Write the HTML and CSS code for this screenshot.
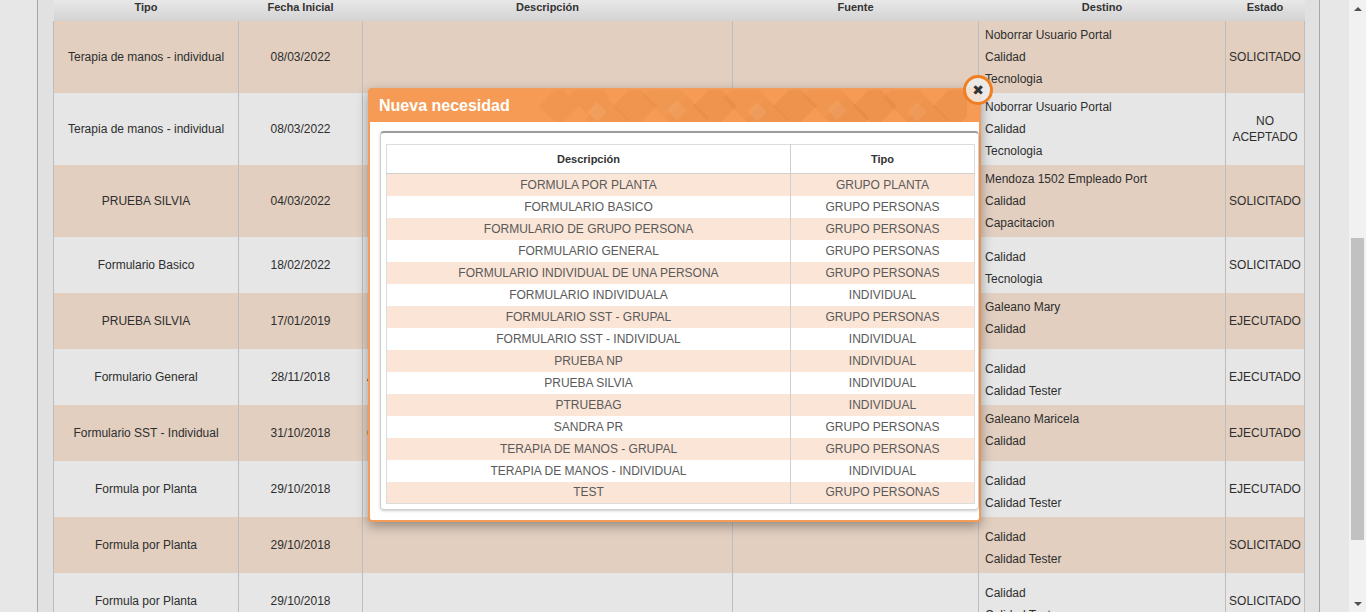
FILE: index.html
```html
<!DOCTYPE html>
<html lang="es">
<head>
<meta charset="utf-8">
<title>Necesidades</title>
<link rel="stylesheet" href="styles.css">
</head>
<body>
<div class="page">
  <div class="gutter"></div>
  <div class="content">
    <table class="grid">
      <colgroup>
        <col style="width:185px"><col style="width:124px"><col style="width:370px"><col style="width:246px"><col style="width:247px"><col style="width:79px">
      </colgroup>
      <thead>
        <tr><th>Tipo</th><th>Fecha Inicial</th><th>Descripción</th><th>Fuente</th><th>Destino</th><th>Estado</th></tr>
      </thead>
      <tbody>
        <tr class="odd"><td>Terapia de manos - individual</td><td>08/03/2022</td><td class="desc"></td><td></td><td class="dest"><div>Noborrar Usuario Portal</div><div>Calidad</div><div>Tecnologia</div></td><td>SOLICITADO</td></tr>
        <tr class="even"><td>Terapia de manos - individual</td><td>08/03/2022</td><td class="desc"></td><td></td><td class="dest"><div>Noborrar Usuario Portal</div><div>Calidad</div><div>Tecnologia</div></td><td>NO ACEPTADO</td></tr>
        <tr class="odd"><td>PRUEBA SILVIA</td><td>04/03/2022</td><td class="desc"></td><td></td><td class="dest"><div>Mendoza 1502 Empleado Port</div><div>Calidad</div><div>Capacitacion</div></td><td>SOLICITADO</td></tr>
        <tr class="even"><td>Formulario Basico</td><td>18/02/2022</td><td class="desc"></td><td></td><td class="dest dest-low"><div>Calidad</div><div>Tecnologia</div></td><td>SOLICITADO</td></tr>
        <tr class="odd"><td>PRUEBA SILVIA</td><td>17/01/2019</td><td class="desc"></td><td></td><td class="dest"><div>Galeano Mary</div><div>Calidad</div></td><td>EJECUTADO</td></tr>
        <tr class="even"><td>Formulario General</td><td>28/11/2018</td><td class="desc">Aplica a todo el personal</td><td></td><td class="dest dest-low"><div>Calidad</div><div>Calidad Tester</div></td><td>EJECUTADO</td></tr>
        <tr class="odd"><td>Formulario SST - Individual</td><td>31/10/2018</td><td class="desc">Control SST individual</td><td></td><td class="dest"><div>Galeano Maricela</div><div>Calidad</div></td><td>EJECUTADO</td></tr>
        <tr class="even"><td>Formula por Planta</td><td>29/10/2018</td><td class="desc"></td><td></td><td class="dest dest-low"><div>Calidad</div><div>Calidad Tester</div></td><td>EJECUTADO</td></tr>
        <tr class="odd"><td>Formula por Planta</td><td>29/10/2018</td><td class="desc"></td><td></td><td class="dest dest-low"><div>Calidad</div><div>Calidad Tester</div></td><td>SOLICITADO</td></tr>
        <tr class="even"><td>Formula por Planta</td><td>29/10/2018</td><td class="desc"></td><td></td><td class="dest dest-low"><div>Calidad</div><div>Calidad Tester</div></td><td>SOLICITADO</td></tr>
      </tbody>
    </table>
  </div>
  <div class="spacer"></div>
  <div class="scrollbar">
    <div class="sb-btn"><span class="arrow-up"></span></div>
    <div class="sb-track"><div class="sb-thumb"></div></div>
    <div class="sb-btn"><span class="arrow-down"></span></div>
  </div>
</div>

<div class="modal">
  <div class="modal-head">
    <svg class="head-pattern" viewBox="0 0 430 32" width="430" height="32" aria-hidden="true">
      <g fill="#c46a2a">
        <polygon points="22,-4 42,16 22,36 2,16" opacity=".10"/>
        <polygon points="52,-14 72,6 52,26 32,6" opacity=".08"/>
        <polygon points="70,8 92,30 70,52 48,30" opacity=".10"/>
        <polygon points="98,-6 120,16 98,38 76,16" opacity=".12"/>
        <polygon points="128,-16 150,6 128,28 106,6" opacity=".09"/>
        <polygon points="150,6 172,28 150,50 128,28" opacity=".12"/>
        <polygon points="178,-6 200,16 178,38 156,16" opacity=".14"/>
        <polygon points="208,-14 230,8 208,30 186,8" opacity=".10"/>
        <polygon points="230,8 252,30 230,52 208,30" opacity=".14"/>
        <polygon points="258,-6 280,16 258,38 236,16" opacity=".15"/>
        <polygon points="288,-16 310,6 288,28 266,6" opacity=".11"/>
        <polygon points="310,6 332,28 310,50 288,28" opacity=".15"/>
        <polygon points="338,-6 360,16 338,38 316,16" opacity=".16"/>
        <polygon points="368,-14 390,8 368,30 346,8" opacity=".12"/>
        <polygon points="390,8 412,30 390,52 368,30" opacity=".16"/>
        <polygon points="418,-6 440,16 418,38 396,16" opacity=".16"/>
      </g>
      <g fill="#ffffff">
        <polygon points="60,12 70,22 60,32 50,22" opacity=".08"/>
        <polygon points="140,10 150,20 140,30 130,20" opacity=".08"/>
        <polygon points="220,12 230,22 220,32 210,22" opacity=".07"/>
        <polygon points="300,10 310,20 300,30 290,20" opacity=".07"/>
        <polygon points="380,12 390,22 380,32 370,22" opacity=".06"/>
      </g>
    </svg>
    <span class="modal-title">Nueva necesidad</span>
  </div>
  <div class="panel">
    <table class="mtable">
      <colgroup><col style="width:404px"><col style="width:184px"></colgroup>
      <thead><tr><th>Descripción</th><th>Tipo</th></tr></thead>
      <tbody>
        <tr><td>FORMULA POR PLANTA</td><td>GRUPO PLANTA</td></tr>
        <tr><td>FORMULARIO BASICO</td><td>GRUPO PERSONAS</td></tr>
        <tr><td>FORMULARIO DE GRUPO PERSONA</td><td>GRUPO PERSONAS</td></tr>
        <tr><td>FORMULARIO GENERAL</td><td>GRUPO PERSONAS</td></tr>
        <tr><td>FORMULARIO INDIVIDUAL DE UNA PERSONA</td><td>GRUPO PERSONAS</td></tr>
        <tr><td>FORMULARIO INDIVIDUALA</td><td>INDIVIDUAL</td></tr>
        <tr><td>FORMULARIO SST - GRUPAL</td><td>GRUPO PERSONAS</td></tr>
        <tr><td>FORMULARIO SST - INDIVIDUAL</td><td>INDIVIDUAL</td></tr>
        <tr><td>PRUEBA NP</td><td>INDIVIDUAL</td></tr>
        <tr><td>PRUEBA SILVIA</td><td>INDIVIDUAL</td></tr>
        <tr><td>PTRUEBAG</td><td>INDIVIDUAL</td></tr>
        <tr><td>SANDRA PR</td><td>GRUPO PERSONAS</td></tr>
        <tr><td>TERAPIA DE MANOS - GRUPAL</td><td>GRUPO PERSONAS</td></tr>
        <tr><td>TERAPIA DE MANOS - INDIVIDUAL</td><td>INDIVIDUAL</td></tr>
        <tr><td>TEST</td><td>GRUPO PERSONAS</td></tr>
      </tbody>
    </table>
  </div>
  <div class="modal-close">✖</div>
</div>
</body>
</html>
```

FILE: styles.css
```css
* { box-sizing: border-box; }

html, body {
  margin: 0;
  height: 612px;
  overflow: hidden;
}

body {
  font-family: "Liberation Sans", Arial, sans-serif;
  font-size: 12px;
  color: #2e2e2e;
  background: #e6e6e6;
  position: relative;
}

.page {
  display: flex;
  height: 612px;
}

.gutter {
  flex: none;
  width: 38px;
  background: #e7e7e7;
  border-right: 1px solid #a6a6a6;
}

.content {
  flex: none;
  width: 1282px;
  padding: 0 15px;
  background: #e1e1e1;
  border-right: 1px solid #a6a6a6;
}

.spacer {
  flex: none;
  width: 29px;
  background: #e7e7e7;
}

/* fake browser scrollbar */
.scrollbar {
  flex: none;
  width: 17px;
  background: #f1f1f1;
  display: flex;
  flex-direction: column;
}

.sb-btn {
  height: 17px;
  display: flex;
  align-items: center;
  justify-content: center;
}

.arrow-up {
  width: 0;
  height: 0;
  border-left: 4px solid transparent;
  border-right: 4px solid transparent;
  border-bottom: 4px solid #505050;
}

.arrow-down {
  width: 0;
  height: 0;
  border-left: 4px solid transparent;
  border-right: 4px solid transparent;
  border-top: 4px solid #505050;
}

.sb-track {
  flex: 1;
  padding: 221px 2px 0;
}

.sb-thumb {
  height: 302px;
  background: #c1c1c1;
}

/* main grid */
.grid {
  width: 1251px;
  table-layout: fixed;
  border-collapse: collapse;
}

.grid th {
  height: 21px;
  padding: 0;
  font-size: 11px;
  font-weight: bold;
  line-height: 14px;
  vertical-align: top;
  color: #333;
  background: linear-gradient(#e8e8e8, #d3d3d3);
}

.grid tbody tr {
  height: 56px;
}

.grid td {
  padding: 3px 2px;
  line-height: 16px;
  text-align: center;
  vertical-align: middle;
  border-left: 1px solid #bdbdbd;
  border-right: 1px solid #bdbdbd;
}

.grid tr.odd td { background: #e2cfc0; }
.grid tr.even td { background: #e6e6e6; }

.grid td.desc {
  text-align: left;
  padding-left: 4px;
  white-space: nowrap;
  overflow: hidden;
}

.grid td.dest {
  text-align: left;
  vertical-align: top;
  padding: 3px 6px 3px;
}

.grid td.dest-low {
  padding-top: 9px;
}

.dest div {
  line-height: 22px;
  white-space: nowrap;
}

/* modal */
.modal {
  position: absolute;
  left: 368px;
  top: 88px;
  width: 613px;
  height: 434px;
  border: 2px solid #f39b58;
  border-radius: 4px;
  background: #fff;
  box-shadow: 0 4px 12px rgba(0, 0, 0, 0.35);
}

.modal-head {
  position: relative;
  height: 32px;
  padding-left: 9px;
  display: flex;
  align-items: center;
  background: #f59b55;
  overflow: hidden;
}

.head-pattern {
  position: absolute;
  right: 12px;
  top: 0;
}

.modal-title {
  position: relative;
  color: #fff;
  font-size: 16px;
  font-weight: bold;
}

.panel {
  margin: 9px 0 0 10px;
  width: 599px;
  height: 379px;
  padding: 11px 4px 5px 5px;
  border: 1px solid #cfcfcf;
  border-top: 2px solid #9c9c9c;
  border-radius: 4px;
  box-shadow: 0 1px 3px rgba(0, 0, 0, 0.2);
}

.mtable {
  width: 588px;
  table-layout: fixed;
  border-collapse: collapse;
  border: 1px solid #dcdcdc;
}

.mtable th {
  height: 29px;
  padding: 0;
  font-size: 11px;
  font-weight: bold;
  color: #333;
  background: #fff;
  border-bottom: 1px solid #cfcfcf;
}

.mtable tbody tr {
  height: 22px;
}

.mtable td {
  height: 22px;
  padding: 0;
  line-height: 14px;
  text-align: center;
  font-size: 12px;
  color: #5a5a5a;
  background: #fff;
}

.mtable th + th,
.mtable td + td {
  border-left: 1px solid #cfcfcf;
}

.mtable tbody tr:nth-child(odd) td {
  background: #fae5d6;
}

.modal-close {
  position: absolute;
  left: 593px;
  top: -15px;
  width: 30px;
  height: 30px;
  border-radius: 50%;
  border: 3px solid #f07e22;
  background: rgba(240, 240, 240, 0.8);
  display: flex;
  align-items: center;
  justify-content: center;
  font-family: "DejaVu Sans", sans-serif;
  font-size: 14px;
  line-height: 1;
  color: #333;
}
```
